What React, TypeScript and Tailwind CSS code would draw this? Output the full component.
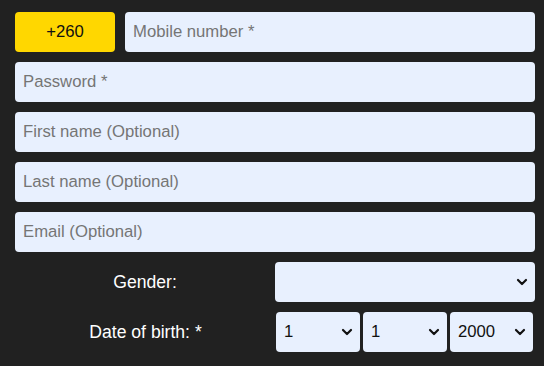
const fields = ["Password *", "First name (Optional)", "Last name (Optional)", "Email (Optional)"]

function Chevron() {
  return (
    <svg width="12" height="8" viewBox="0 0 12 8" fill="none" stroke="#111" strokeWidth="2.2" strokeLinecap="round" strokeLinejoin="round">
      <path d="M2 2l4 4 4-4" />
    </svg>
  )
}

function Select({ value, className }: { value: string; className: string }) {
  return (
    <div className={`flex h-10 shrink-0 items-center justify-between rounded bg-[#e8f0fe] pl-[8px] pr-[7px] text-[16.7px] text-[#111] ${className}`}>
      <span>{value}</span>
      <Chevron />
    </div>
  )
}

export default function App() {
  return (
    <div className="h-[366px] w-[544px] bg-[#212121] pl-[15px] pr-[9px] pt-3 font-['Liberation_Sans',Arial,sans-serif] text-[16.7px]">
      <div className="flex gap-[10px]">
        <div className="flex h-10 w-[100px] items-center justify-center rounded bg-[#ffd700] text-[#111]">+260</div>
        <div className="flex h-10 flex-1 items-center rounded bg-[#e8f0fe] px-2 text-[#757575]">Mobile number *</div>
      </div>
      {fields.map((f) => (
        <div key={f} className="mt-[10px] flex h-10 items-center rounded bg-[#e8f0fe] px-2 text-[#757575]">
          {f}
        </div>
      ))}
      <div className="mt-[10px] flex items-center">
        <div className="w-[260px] text-center text-[17.6px] text-white">Gender:</div>
        <Select value="" className="flex-1" />
      </div>
      <div className="mt-[10px] flex items-center">
        <div className="w-[261px] text-center text-[17.6px] text-white">Date of birth: *</div>
        <div className="flex gap-[3px]">
          <Select value="1" className="w-[84px]" />
          <Select value="1" className="w-[84px]" />
          <Select value="2000" className="w-[83px]" />
        </div>
      </div>
    </div>
  )
}
